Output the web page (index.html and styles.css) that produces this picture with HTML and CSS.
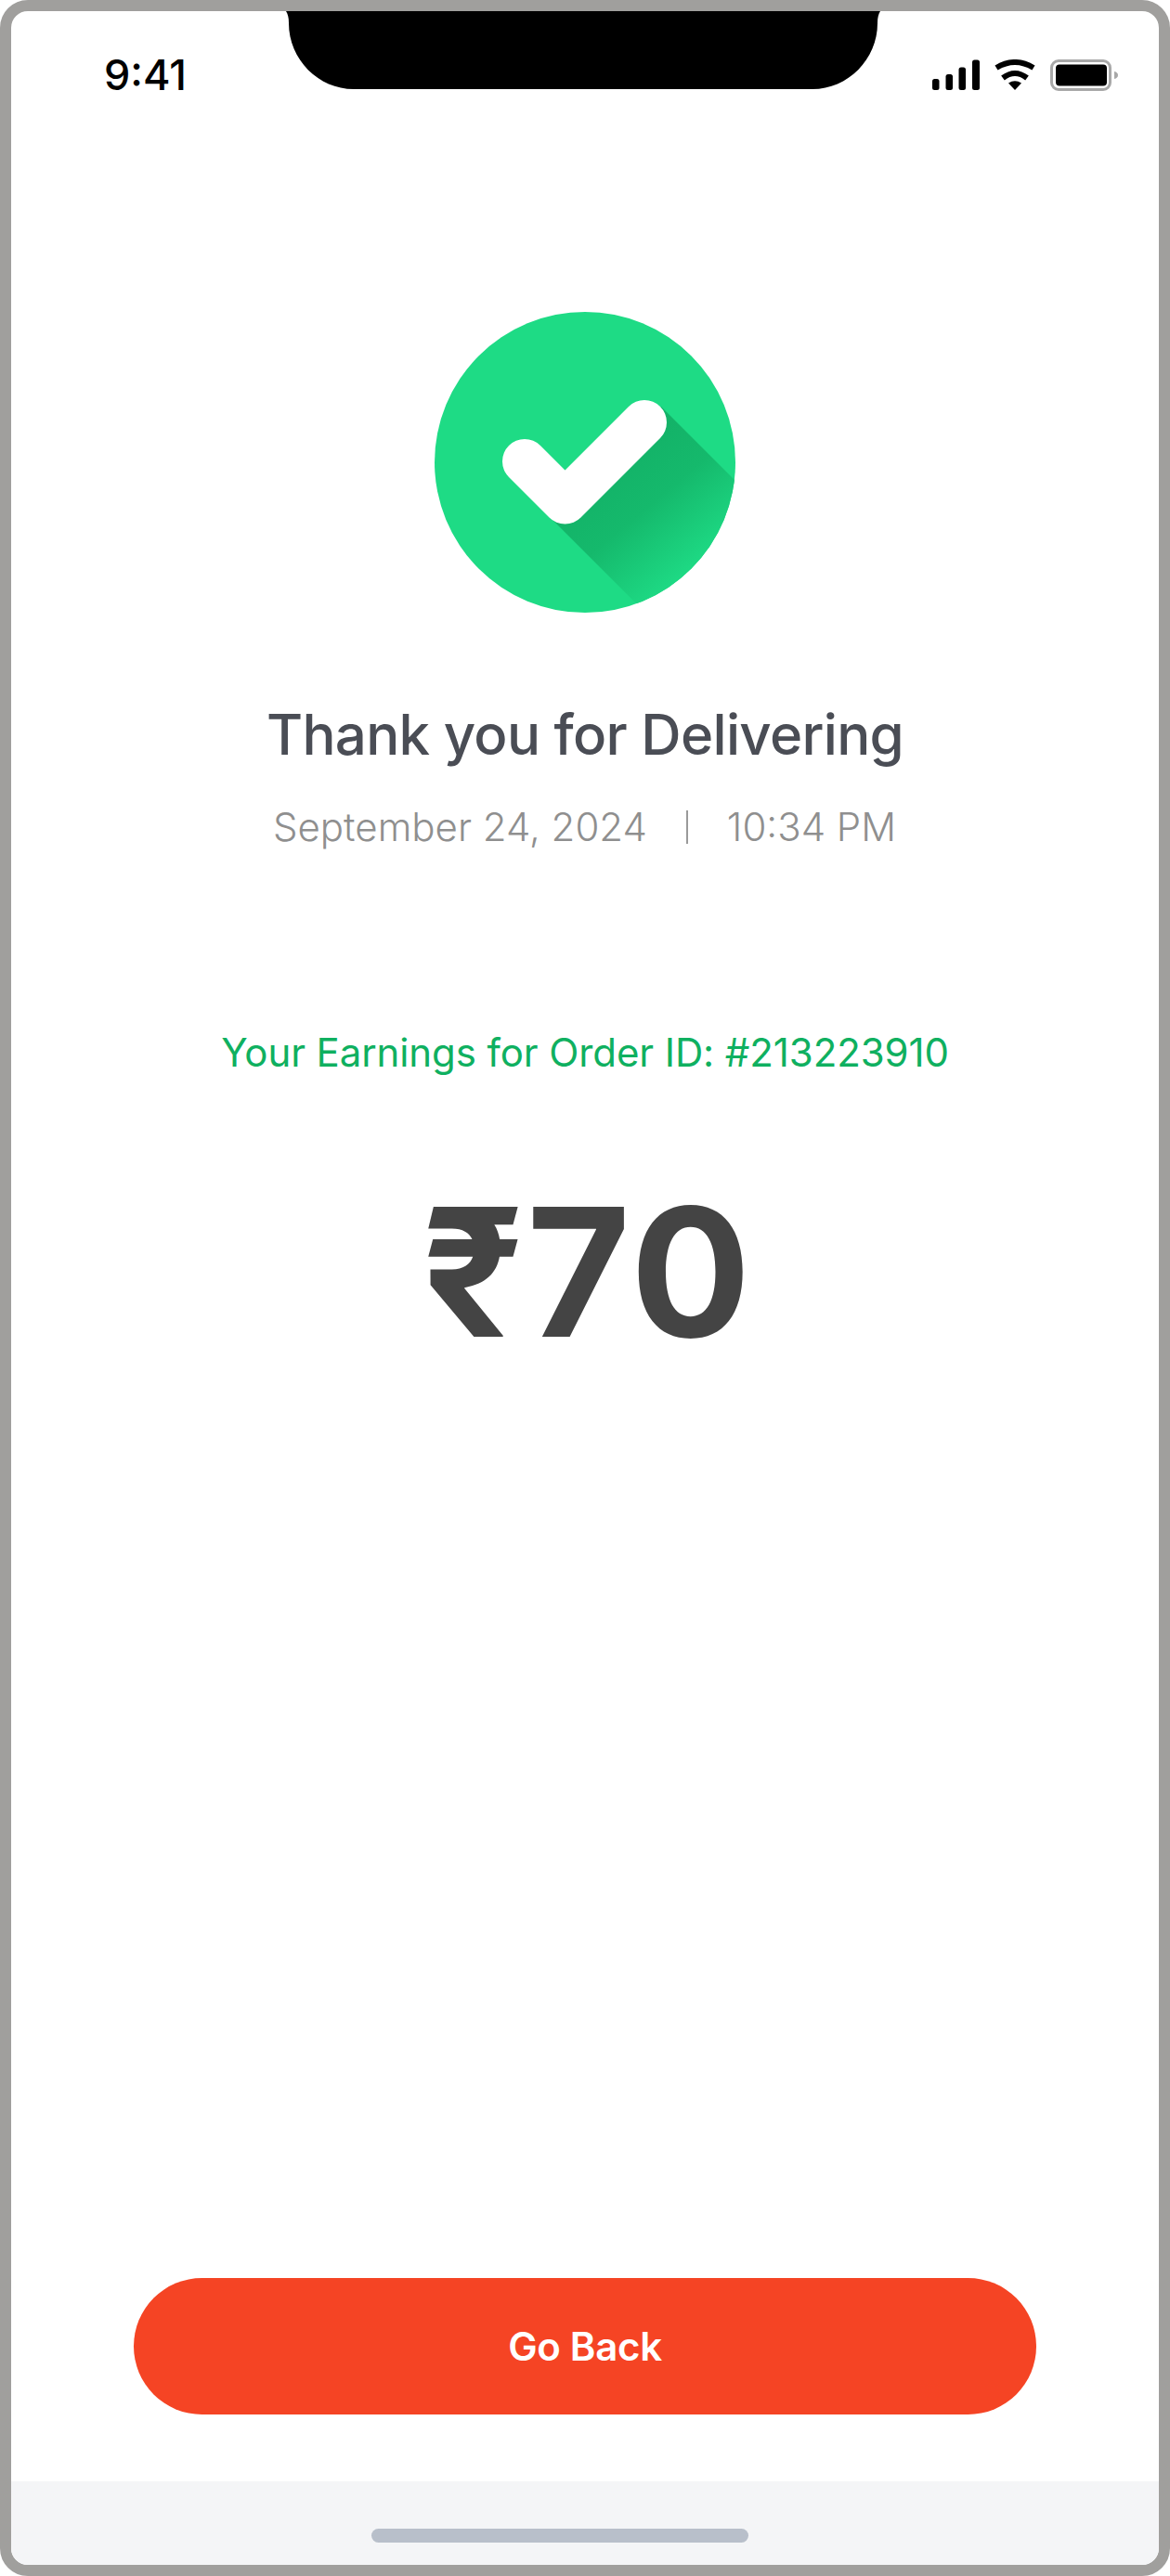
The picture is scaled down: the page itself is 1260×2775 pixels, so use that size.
FILE: index.html
```html
<!DOCTYPE html>
<html lang="en">
<head>
<meta charset="utf-8">
<title>Thank you for Delivering</title>
<link rel="stylesheet" href="styles.css">
</head>
<body>
<div class="phone">
  <svg class="notch" viewBox="0 0 640 84" width="640" height="84" aria-hidden="true">
    <path d="M0 0H640C638 3 637 7 637 13C637 52 605 84 567 84H73C35 84 3 52 3 13C3 7 2 3 0 0Z"/>
  </svg>
  <header class="status">
    <span class="time">9:41</span>
    <div class="status-icons">
      <svg class="signal" viewBox="0 0 51 33" width="51" height="33" aria-hidden="true">
        <rect x="0" y="21" width="7.5" height="12" rx="2.5"/>
        <rect x="14.5" y="16" width="7.5" height="17" rx="2.5"/>
        <rect x="28.5" y="8.5" width="7.5" height="24.5" rx="2.5"/>
        <rect x="43" y="0.5" width="8" height="32.5" rx="2.5"/>
      </svg>
      <svg class="wifi" viewBox="0 0 46 33" width="46" height="33" aria-hidden="true">
        <path class="wifi-arc" d="M3 9Q23 -3 43 9"/>
        <path class="wifi-arc" d="M10 20Q23 10 36 20"/>
        <path d="M16 25.5Q23 21 30 25.5L23 33Z"/>
      </svg>
      <svg class="battery" viewBox="0 0 73 34" width="73" height="34" aria-hidden="true">
        <rect class="battery-shell" x="1.5" y="1.5" width="63" height="31" rx="7.5"/>
        <rect x="6" y="5.5" width="55" height="23" rx="4"/>
        <path class="battery-nub" d="M69 13C71.5 13.5 73 15 73 17C73 19 71.5 20.5 69 21Z"/>
      </svg>
    </div>
  </header>
  <main class="content">
    <svg class="check" viewBox="0 0 324 324" width="324" height="324" aria-hidden="true">
      <defs>
        <linearGradient id="shadeFade" gradientUnits="userSpaceOnUse" x1="180" y1="160" x2="280" y2="280">
          <stop offset="0" stop-color="#13b167"/>
          <stop offset="0.45" stop-color="#15b96c"/>
          <stop offset="1" stop-color="#1edb85"/>
        </linearGradient>
        <clipPath id="disc"><circle cx="162" cy="162" r="162"/></clipPath>
      </defs>
      <circle class="check-disc" cx="162" cy="162" r="162"/>
      <path clip-path="url(#disc)" fill="url(#shadeFade)" d="M125 222L244 102L364 222L265 362Z"/>
      <path class="check-mark" d="M97 161L140.500 204.500L226 119"/>
    </svg>
    <h1 class="title">Thank you for Delivering</h1>
    <div class="meta">
      <span>September 24, 2024</span>
      <span class="meta-divider"></span>
      <span>10:34 PM</span>
    </div>
    <p class="order">Your Earnings for Order ID: #213223910</p>
    <div class="amount">₹70</div>
    <button class="back" type="button">Go Back</button>
  </main>
  <footer class="home">
    <span class="home-bar"></span>
  </footer>
</div>
</body>
</html>
```

FILE: styles.css
```css
* {
  box-sizing: border-box;
}

html,
body {
  margin: 0;
  padding: 0;
  background: #fff;
}

body {
  font-family: Inter, "Noto Sans", sans-serif;
}

.phone {
  position: relative;
  width: 1260px;
  height: 2775px;
  display: flex;
  flex-direction: column;
  overflow: hidden;
  background: #fff;
  border: 12px solid #a09f9d;
  border-radius: 30px;
}

.notch {
  position: absolute;
  top: 0;
  left: 296px;
  display: block;
  fill: #000;
}

.status {
  height: 84px;
  flex: none;
  display: flex;
  justify-content: space-between;
  align-items: flex-start;
  padding: 42px 44px 0 100px;
}

.time {
  font-size: 45px;
  line-height: 52px;
  font-weight: 500;
  color: #000;
  margin-top: 1px;
}

.status-icons {
  display: flex;
  align-items: flex-start;
  margin-top: 10px;
}

.status-icons svg {
  display: block;
  fill: #000;
}

.signal {
  margin-right: 15px;
}

.wifi {
  margin-right: 15px;
}

.wifi-arc {
  fill: none;
  stroke: #000;
  stroke-width: 6;
}

.status-icons .battery-shell {
  fill: none;
  stroke: #a8a8a8;
  stroke-width: 3;
}

.status-icons .battery-nub {
  fill: #a8a8a8;
}

.content {
  flex: 1;
  display: flex;
  flex-direction: column;
  align-items: center;
  padding-top: 240px;
  min-height: 0;
}

.check {
  display: block;
  flex: none;
}

.check-disc {
  fill: #1edb85;
}

.check-mark {
  fill: none;
  stroke: #fff;
  stroke-width: 48;
  stroke-linecap: round;
  stroke-linejoin: round;
}

.title {
  margin: 95px 0 0;
  font-size: 60px;
  line-height: 72px;
  font-weight: 500;
  letter-spacing: -0.7px;
  color: #4a4d55;
  white-space: nowrap;
}

.meta {
  display: flex;
  align-items: center;
  margin: 39px 1px 0 0;
  font-size: 42px;
  line-height: 50px;
  font-weight: 300;
  color: #8f8f8f;
  white-space: nowrap;
}

.meta-divider {
  width: 2px;
  height: 36px;
  margin: 0 42px;
  background: #9a9a9a;
}

.order {
  margin: 193px 0 0;
  font-size: 42px;
  line-height: 50px;
  font-weight: 400;
  letter-spacing: -0.1px;
  color: #0fb060;
  white-space: nowrap;
}

.amount {
  margin-top: 95px;
  padding-left: 6px;
  font-size: 192px;
  line-height: 232px;
  font-weight: 700;
  letter-spacing: 3px;
  color: #444;
  white-space: nowrap;
}

.back {
  width: 972px;
  height: 147px;
  flex: none;
  margin: auto 0 72px;
  border: 0;
  border-radius: 74px;
  background: #f54424;
  color: #fff;
  font-family: inherit;
  font-size: 42px;
  font-weight: 600;
  letter-spacing: -0.3px;
}

.home {
  height: 90px;
  flex: none;
  padding: 51px 0 0 388px;
  background: #f4f5f7;
}

.home-bar {
  display: block;
  width: 406px;
  height: 15px;
  border-radius: 8px;
  background: #b8bfca;
}
```
